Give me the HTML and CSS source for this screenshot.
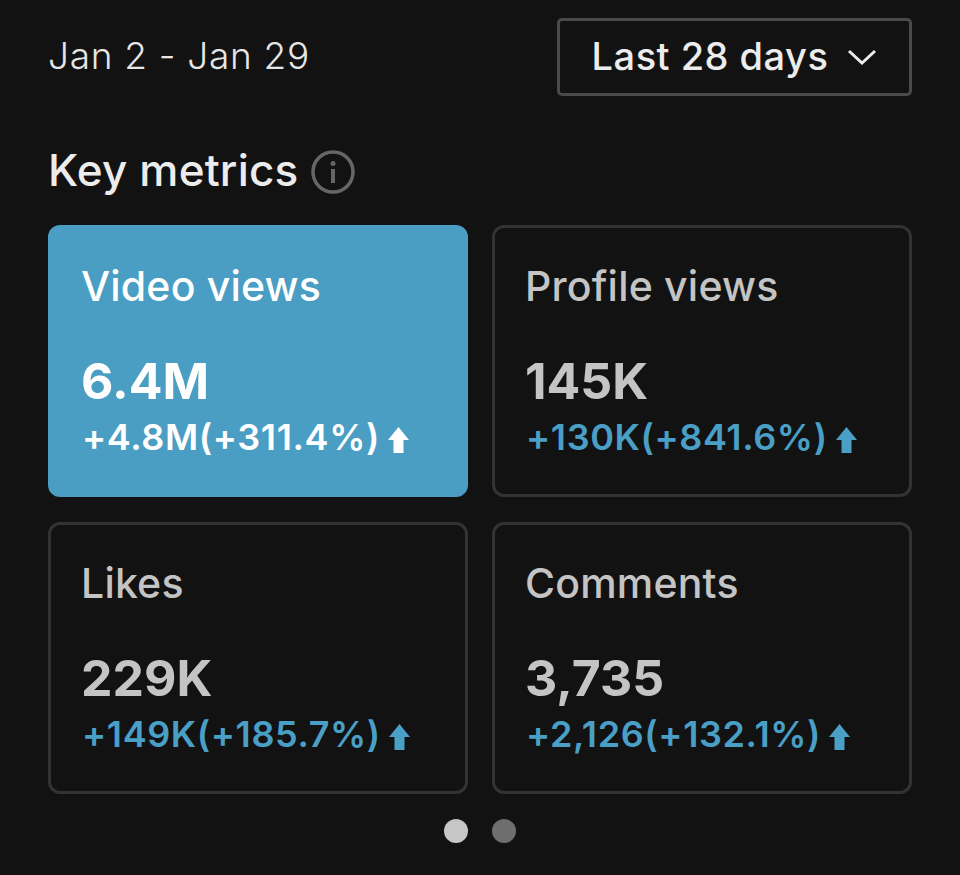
FILE: index.html
```html
<!DOCTYPE html>
<html lang="en">
<head>
    <meta charset="UTF-8">
    <meta name="viewport" content="width=device-width, initial-scale=1.0">
    <title>Key metrics</title>
    <link rel="stylesheet" href="styles.css">
</head>
<body>
    <div class="container">
        <div class="top-row">
            <span class="date-range">Jan 2 - Jan 29</span>
            <div class="range-button">
                <span>Last 28 days</span>
                <svg class="chevron" width="30" height="18" viewBox="0 0 30 18"><path d="M2 3 L15 15 L28 3" fill="none" stroke="#ececec" stroke-width="3"/></svg>
            </div>
        </div>

        <div class="section-title">
            <h2>Key metrics</h2>
            <svg class="info" width="44" height="44" viewBox="0 0 44 44">
                <circle cx="22" cy="22" r="20" fill="none" stroke="#666" stroke-width="3.5"/>
                <circle cx="22" cy="13.5" r="2.5" fill="#666"/>
                <rect x="20" y="19" width="4" height="14" fill="#666"/>
            </svg>
        </div>

        <div class="metrics">
            <div class="metric active">
                <div class="metric-label">Video views</div>
                <div class="metric-value">6.4M</div>
                <div class="metric-change">
                    <span>+4.8M(+311.4%)</span>
                    <svg class="arrow" width="21" height="26" viewBox="0 0 21 26"><path d="M10.5 0 L21 13 L15.5 13 L15.5 26 L5.5 26 L5.5 13 L0 13 Z"/></svg>
                </div>
            </div>
            <div class="metric">
                <div class="metric-label">Profile views</div>
                <div class="metric-value">145K</div>
                <div class="metric-change">
                    <span>+130K(+841.6%)</span>
                    <svg class="arrow" width="21" height="26" viewBox="0 0 21 26"><path d="M10.5 0 L21 13 L15.5 13 L15.5 26 L5.5 26 L5.5 13 L0 13 Z"/></svg>
                </div>
            </div>
            <div class="metric">
                <div class="metric-label">Likes</div>
                <div class="metric-value">229K</div>
                <div class="metric-change">
                    <span>+149K(+185.7%)</span>
                    <svg class="arrow" width="21" height="26" viewBox="0 0 21 26"><path d="M10.5 0 L21 13 L15.5 13 L15.5 26 L5.5 26 L5.5 13 L0 13 Z"/></svg>
                </div>
            </div>
            <div class="metric">
                <div class="metric-label">Comments</div>
                <div class="metric-value">3,735</div>
                <div class="metric-change">
                    <span>+2,126(+132.1%)</span>
                    <svg class="arrow" width="21" height="26" viewBox="0 0 21 26"><path d="M10.5 0 L21 13 L15.5 13 L15.5 26 L5.5 26 L5.5 13 L0 13 Z"/></svg>
                </div>
            </div>
        </div>

        <div class="dots">
            <span class="dot current"></span>
            <span class="dot"></span>
        </div>
    </div>
</body>
</html>
```

FILE: styles.css
```css
* {
    box-sizing: border-box;
}

body {
    font-family: Inter, "Liberation Sans", sans-serif;
    margin: 0;
    padding: 0;
    background: #121212;
}

.container {
    padding: 18px 48px 0;
}

.top-row {
    display: flex;
    justify-content: space-between;
    align-items: center;
}

.date-range {
    font-size: 37px;
    line-height: 42px;
    margin-top: -2px;
    font-weight: 300;
    color: #e6e6e6;
    letter-spacing: 0.7px;
}

.range-button {
    width: 355px;
    height: 78px;
    display: flex;
    align-items: center;
    justify-content: center;
    gap: 19px;
    border: 3px solid #4a4a4a;
    border-radius: 5px;
    font-size: 38px;
    line-height: 42px;
    font-weight: 500;
    letter-spacing: 0.5px;
    color: #ececec;
}

.range-button span {
    margin-top: -3px;
}

.section-title {
    display: flex;
    align-items: center;
    gap: 13px;
    margin-top: 50px;
    height: 48px;
}

.section-title h2 {
    margin: 0;
    font-size: 44px;
    line-height: 48px;
    font-weight: 500;
    letter-spacing: 0.2px;
    color: #ececec;
}

.info {
    margin-top: 4px;
}

.metrics {
    display: grid;
    grid-template-columns: 420px 420px;
    grid-auto-rows: 272px;
    gap: 25px 24px;
    margin-top: 31px;
}

.metric {
    padding: 35px 30px 0;
    border: 3px solid #333;
    border-radius: 12px;
    color: #c4c4c4;
}

.metric-label {
    font-size: 41px;
    line-height: 46px;
    font-weight: 500;
    letter-spacing: 0.2px;
}

.metric-value {
    margin-top: 47px;
    font-size: 50px;
    line-height: 50px;
    font-weight: 700;
}

.metric-change {
    display: flex;
    align-items: center;
    gap: 8px;
    margin-top: 9px;
    margin-left: 1px;
    font-size: 36px;
    line-height: 44px;
    font-weight: 600;
    letter-spacing: 0.6px;
    color: #4a9fc6;
}

.arrow {
    fill: #4a9fc6;
    margin-top: 6px;
}

.metric.active {
    background: #4a9dc3;
    border-color: #4a9dc3;
    color: #fff;
}

.metric.active .metric-change {
    color: #fff;
}

.metric.active .arrow {
    fill: #fff;
}

.dots {
    display: flex;
    justify-content: center;
    gap: 24px;
    margin-top: 25px;
}

.dot {
    width: 24px;
    height: 24px;
    border-radius: 50%;
    background: #6e6e6e;
}

.dot.current {
    background: #c6c6c6;
}
```
